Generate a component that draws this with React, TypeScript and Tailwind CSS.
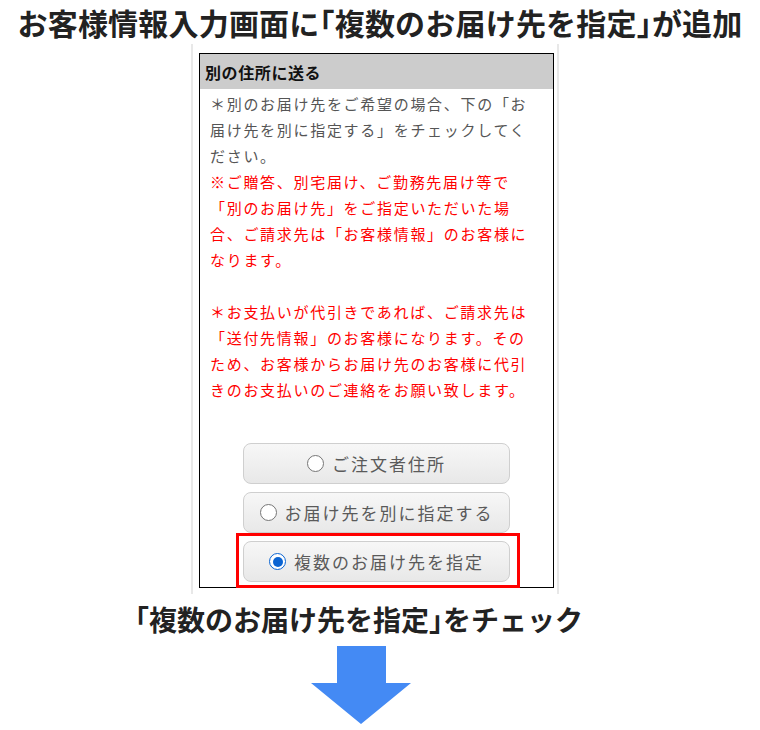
import React from "react";

const jp = { fontFamily: '"Noto Sans CJK JP", "Noto Sans", sans-serif' };

// half-width brackets, as in the reference headings
const B = ({ children }: { children: string }) => (
  <span className="[font-feature-settings:'halt']">{children}</span>
);

const Radio = ({ checked }: { checked?: boolean }) =>
  checked ? (
    <span className="flex h-[17px] w-[17px] items-center justify-center rounded-full border-[1.5px] border-[#0b64d2] bg-white">
      <span className="h-[10px] w-[10px] rounded-full bg-[#0b64d2]" />
    </span>
  ) : (
    <span className="h-[17px] w-[17px] rounded-full border border-[#767676] bg-white" />
  );

const Choice = ({ label, checked }: { label: string; checked?: boolean }) => (
  <div className="flex h-[41px] w-[267px] items-center justify-center gap-[8px] rounded-[8px] border border-[#cfcfcf] bg-gradient-to-b from-[#f7f7f7] to-[#e8e8e8]">
    <Radio checked={checked} />
    <span className="text-[17px] tracking-[2px] text-[#5a5a5a]">{label}</span>
  </div>
);

const App = () => {
  return (
    <div className="flex h-[730px] w-[760px] flex-col items-center bg-white" style={jp}>
      <h1 className="h-[44px] text-[30px] font-bold leading-[44px] tracking-[0.2px] text-[#222]">
        お客様情報入力画面に<B>「</B>複数のお届け先を指定<B>」</B>が追加
      </h1>

      <div className="mr-[10px] w-[368px] border-x-2 border-[#e8e8e8] pb-[6px] pt-[9px]">
        <div className="ml-[6px] w-[355px] border border-black bg-white">
          <div className="flex h-[35px] items-center bg-[#cccccc] pl-[5px] text-[16px] font-bold tracking-[0.6px] text-[#111]">
            別の住所に送る
          </div>
          <div className="pl-[10px] pr-[14px] pt-[2px] text-[15px] leading-[26px] tracking-[1.7px]">
            <p className="text-[#555]">
              ＊別のお届け先をご希望の場合、下の「お届け先を別に指定する」をチェックしてください。
            </p>
            <p className="text-[#ff0000]">
              ※ご贈答、別宅届け、ご勤務先届け等で「別のお届け先」をご指定いただいた場合、ご請求先は「お客様情報」のお客様になります。
            </p>
            <p className="mt-[26px] text-[#ff0000]">
              ＊お支払いが代引きであれば、ご請求先は「送付先情報」のお客様になります。そのため、お客様からお届け先のお客様に代引きのお支払いのご連絡をお願い致します。
            </p>
          </div>
          <div className="flex flex-col items-center gap-[8px] pb-[5px] pt-[40px]">
            <Choice label="ご注文者住所" />
            <Choice label="お届け先を別に指定する" />
            <div className="relative">
              <Choice label="複数のお届け先を指定" checked />
              <div className="absolute -bottom-[6px] -left-[7px] -right-[10px] -top-[8px] border-[3px] border-[#ff0000]" />
            </div>
          </div>
        </div>
      </div>

      <h2 className="mr-[42px] h-[50px] text-[28px] font-bold leading-[50px] text-[#222]">
        <B>「</B>複数のお届け先を指定<B>」</B>をチェック
      </h2>

      <svg width="100" height="78" viewBox="0 0 100 78" className="mr-[38px] mt-[2px]">
        <path d="M26 0 H75 V37 H100 L50 78 L0 37 H26 Z" fill="#448af4" />
      </svg>
    </div>
  );
};

export default App;
